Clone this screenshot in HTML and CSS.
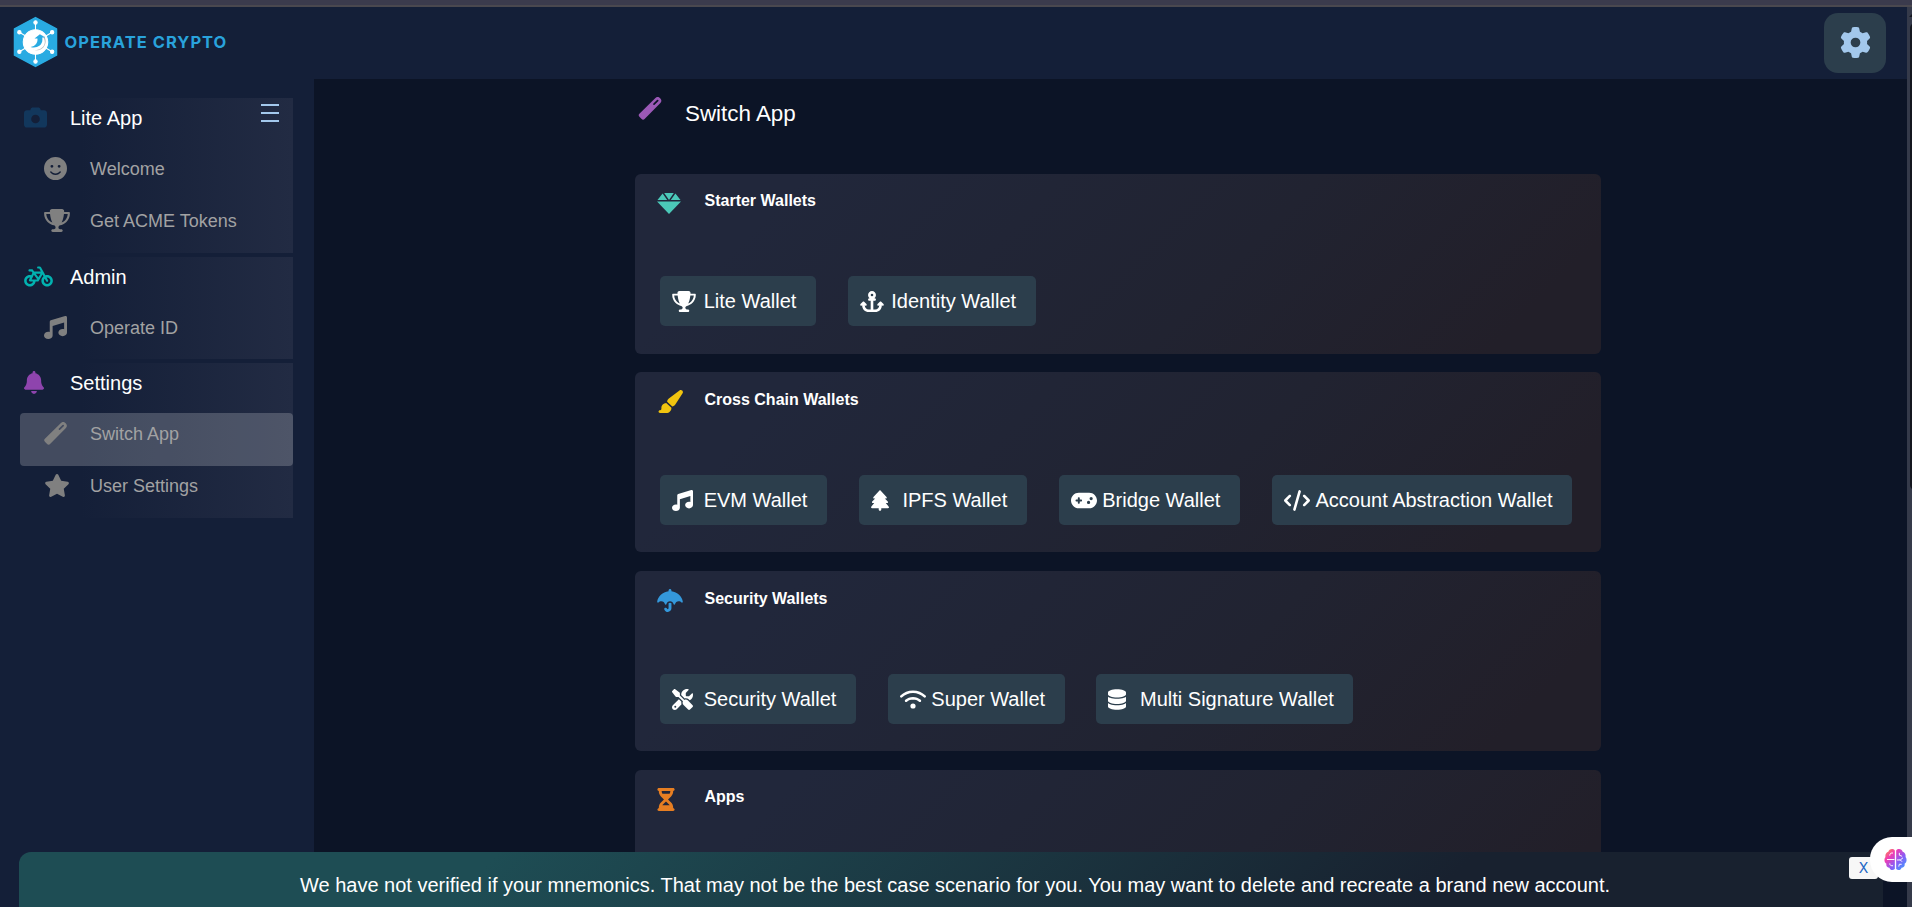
FILE: index.html
```html
<!DOCTYPE html>
<html lang="en">
<head>
<meta charset="utf-8">
<title>Operate Crypto</title>
<link rel="stylesheet" href="styles.css">
</head>
<body>
<svg class="defs" aria-hidden="true">
  <symbol id="trophy" viewBox="0 0 576 512"><path d="M400 0H176c-26.5 0-48.1 21.8-47.1 48.2c.2 5.3 .4 10.6 .7 15.8H24C10.7 64 0 74.7 0 88c0 92.6 33.5 157 78.5 200.7c44.3 43.1 98.3 64.8 138.1 75.8c23.4 6.5 39.4 26 39.4 45.6c0 20.9-17 37.9-37.9 37.9H192c-17.7 0-32 14.3-32 32s14.3 32 32 32H384c17.7 0 32-14.3 32-32s-14.3-32-32-32H357.9C337 448 320 431 320 410.1c0-19.6 15.9-39.2 39.4-45.6c39.9-11 93.9-32.7 138.2-75.8C542.5 245 576 180.6 576 88c0-13.3-10.7-24-24-24H446.4c.3-5.2 .5-10.4 .7-15.8C448.1 21.8 426.5 0 400 0zM48.9 112h84.4c9.1 90.1 29.2 150.3 51.9 190.6c-24.9-11-50.8-26.5-73.2-48.3c-32-31.1-58-76-63-142.3zM464.1 254.3c-22.4 21.8-48.3 37.3-73.2 48.3c22.7-40.3 42.8-100.5 51.9-190.6h84.4c-5.1 66.3-31.1 111.2-63 142.3z"/></symbol>
  <symbol id="music" viewBox="0 0 512 512"><path d="M499.1 6.3c8.1 6 12.9 15.6 12.9 25.7v72V368c0 44.2-43 80-96 80s-96-35.8-96-80s43-80 96-80c11.2 0 22 1.6 32 4.6V147L192 223.8V432c0 44.2-43 80-96 80s-96-35.8-96-80s43-80 96-80c11.2 0 22 1.6 32 4.6V200 128c0-14.1 9.3-26.6 22.8-30.7l320-96c9.7-2.9 20.2-1.1 28.3 5z"/></symbol>
  <symbol id="bell" viewBox="0 0 448 512"><path d="M224 0c-17.7 0-32 14.3-32 32V51.2C119 66 64 130.6 64 208v18.8c0 47-17.3 92.4-48.5 127.6l-7.4 8.3c-8.4 9.4-10.4 22.9-5.3 34.4S19.4 416 32 416H416c12.6 0 24-7.4 29.2-18.9s3.1-25-5.3-34.4l-7.4-8.3C401.3 319.2 384 273.9 384 226.8V208c0-77.4-55-142-128-156.8V32c0-17.7-14.3-32-32-32zm45.3 493.3c12-12 18.7-28.3 18.7-45.3H224 160c0 17 6.7 33.3 18.7 45.3s28.3 18.7 45.3 18.7s33.3-6.7 45.3-18.7z"/></symbol>
  <symbol id="star" viewBox="0 0 576 512"><path d="M316.9 18C311.6 7 300.4 0 288.1 0s-23.4 7-28.8 18L195 150.3 51.4 171.5c-12 1.8-22 10.2-25.7 21.7s-.7 24.2 7.9 32.7L137.8 329 113.2 474.7c-2 12 3 24.2 12.9 31.3s23 8 33.8 2.3l128.3-68.5 128.3 68.5c10.8 5.7 23.9 4.9 33.8-2.3s14.9-19.3 12.9-31.3L438.5 329 542.7 225.9c8.6-8.5 11.7-21.2 7.9-32.7s-13.7-19.9-25.7-21.7L381.2 150.3 316.9 18z"/></symbol>
  <symbol id="camera" viewBox="0 0 512 512"><path d="M149.1 64.8L138.7 96H64C28.7 96 0 124.7 0 160V416c0 35.3 28.7 64 64 64H448c35.3 0 64-28.7 64-64V160c0-35.3-28.7-64-64-64H373.3L362.9 64.8C356.4 45.2 338.1 32 317.4 32H194.6c-20.7 0-39 13.2-45.5 32.8zM256 192a96 96 0 1 1 0 192 96 96 0 1 1 0-192z"/></symbol>
  <symbol id="smile" viewBox="0 0 512 512"><path d="M256 512A256 256 0 1 0 256 0a256 256 0 1 0 0 512zM164.1 325.5C182 346.2 212.6 368 256 368s74-21.8 91.9-42.5c5.8-6.7 15.9-7.4 22.6-1.6s7.4 15.9 1.6 22.6C349.8 372.1 311.1 400 256 400s-93.8-27.9-116.1-53.5c-5.8-6.7-5.1-16.8 1.6-22.6s16.8-5.1 22.6 1.6zM144.4 208a32 32 0 1 1 64 0 32 32 0 1 1 -64 0zm192-32a32 32 0 1 1 0 64 32 32 0 1 1 0-64z"/></symbol>
  <symbol id="anchor" viewBox="0 0 576 512"><path d="M320 96a32 32 0 1 1 -64 0 32 32 0 1 1 64 0zm21.1 80C367 158.8 384 129.4 384 96c0-53-43-96-96-96s-96 43-96 96c0 33.4 17 62.8 42.9 80H224c-17.7 0-32 14.3-32 32s14.3 32 32 32h32V448H208c-53 0-96-43-96-96v-6.1l7 7c9.4 9.4 24.6 9.4 33.9 0s9.4-24.6 0-33.9L97 263c-9.4-9.4-24.6-9.4-33.9 0L7 319c-9.4 9.4-9.4 24.6 0 33.9s24.6 9.4 33.9 0l7-7V352c0 88.4 71.6 160 160 160h80 80c88.4 0 160-71.6 160-160v-6.1l7 7c9.4 9.4 24.6 9.4 33.9 0s9.4-24.6 0-33.9l-56-56c-9.4-9.4-24.6-9.4-33.9 0l-56 56c-9.4 9.4-9.4 24.6 0 33.9s24.6 9.4 33.9 0l7-7V352c0 53-43 96-96 96H320V240h32c17.7 0 32-14.3 32-32s-14.3-32-32-32H341.1z"/></symbol>
  <symbol id="database" viewBox="0 0 448 512"><path d="M448 80v48c0 44.2-100.3 80-224 80S0 172.2 0 128V80C0 35.8 100.3 0 224 0S448 35.8 448 80zM393.2 214.7c20.8-7.4 39.9-16.9 54.8-28.6V288c0 44.2-100.3 80-224 80S0 332.2 0 288V186.1c14.9 11.8 34 21.2 54.8 28.6C99.7 230.7 159.5 240 224 240s124.3-9.3 169.2-25.3zM0 346.1c14.9 11.8 34 21.2 54.8 28.6C99.7 390.7 159.5 400 224 400s124.3-9.3 169.2-25.3c20.8-7.4 39.9-16.9 54.8-28.6V432c0 44.2-100.3 80-224 80S0 476.2 0 432V346.1z"/></symbol>
  <symbol id="wifi" viewBox="0 0 640 512"><path d="M54.2 202.9C123.2 136.7 216.8 96 320 96s196.8 40.7 265.8 106.9c12.8 12.2 33 11.8 45.2-.9s11.8-33-.9-45.2C549.7 79.5 440.4 32 320 32S90.3 79.5 9.8 156.7C-2.9 169-3.3 189.2 8.9 202s32.5 13.2 45.2 .9zM320 256c56.8 0 108.6 21.1 148.2 56c13.3 11.7 33.5 10.4 45.2-2.8s10.4-33.5-2.8-45.2C459.8 219.2 393 192 320 192s-139.8 27.2-190.5 72c-13.3 11.7-14.5 31.9-2.8 45.2s31.9 14.5 45.2 2.8c39.5-34.9 91.3-56 148.2-56zm64 160a64 64 0 1 0 -128 0 64 64 0 1 0 128 0z"/></symbol>
  <symbol id="code" viewBox="0 0 640 512"><path d="M392.8 1.2c-17-4.9-34.7 5-39.6 22l-128 448c-4.9 17 5 34.7 22 39.6s34.7-5 39.6-22l128-448c4.9-17-5-34.7-22-39.6zm80.6 120.1c-12.5 12.5-12.5 32.8 0 45.3L562.7 256l-89.4 89.4c-12.5 12.5-12.5 32.8 0 45.3s32.8 12.5 45.3 0l112-112c12.5-12.5 12.5-32.8 0-45.3l-112-112c-12.5-12.5-32.8-12.5-45.3 0zm-306.7 0c-12.5-12.5-32.8-12.5-45.3 0l-112 112c-12.5 12.5-12.5 32.8 0 45.3l112 112c12.5 12.5 32.8 12.5 45.3 0s12.5-32.8 0-45.3L77.3 256l89.4-89.4c12.5-12.5 12.5-32.8 0-45.3z"/></symbol>
  <symbol id="gamepad" viewBox="0 0 640 512"><path d="M192 64C86 64 0 150 0 256S86 448 192 448H448c106 0 192-86 192-192s-86-192-192-192H192zM496 168a40 40 0 1 1 0 80 40 40 0 1 1 0-80zM392 304a40 40 0 1 1 80 0 40 40 0 1 1 -80 0zM168 200c0-13.3 10.7-24 24-24s24 10.7 24 24v32h32c13.3 0 24 10.7 24 24s-10.7 24-24 24H216v32c0 13.3-10.7 24-24 24s-24-10.7-24-24V280H136c-13.3 0-24-10.7-24-24s10.7-24 24-24h32V200z"/></symbol>
  <symbol id="tree" viewBox="0 0 448 512"><path d="M210.6 5.9L62 169.4c-3.9 4.2-6 9.8-6 15.5C56 197.7 66.3 208 79.1 208H104L30.6 281.4c-4.2 4.2-6.6 10-6.6 16C24 309.9 34.1 320 46.6 320H80L5.4 409.5C1.9 413.7 0 419 0 424.5c0 13 10.5 23.5 23.5 23.5H192v32c0 17.7 14.3 32 32 32s32-14.3 32-32V448H424.5c13 0 23.5-10.5 23.5-23.5c0-5.5-1.9-10.8-5.4-15L368 320h33.4c12.5 0 22.6-10.1 22.6-22.6c0-6-2.4-11.8-6.6-16L344 208h24.9c12.7 0 23.1-10.3 23.1-23.1c0-5.7-2.1-11.3-6-15.5L237.4 5.9C234 2.1 229.1 0 224 0s-10 2.1-13.4 5.9z"/></symbol>
  <symbol id="umbrella" viewBox="0 0 576 512"><path d="M288 0c17.7 0 32 14.3 32 32V49.7C451.8 63.4 557.7 161 573.9 285.9c2 15.6-17.3 24.4-27.8 12.7C532.1 283 504.8 272 480 272c-38.7 0-71 27.5-78.4 64.1c-1.7 8.7-8.7 15.9-17.6 15.9s-15.8-7.2-17.6-15.9C359 299.5 326.7 272 288 272s-71 27.5-78.4 64.1c-1.7 8.7-8.7 15.9-17.6 15.9s-15.8-7.2-17.6-15.9C167 299.5 134.7 272 96 272c-24.8 0-52.1 11-66.1 26.7C19.4 310.4 .1 301.5 2.1 285.9C18.3 161 124.2 63.4 256 49.7V32c0-17.7 14.3-32 32-32zm0 304c12.3 0 23.5 4.6 32 12.2V430.6c0 45-36.5 81.4-81.4 81.4c-30.8 0-59-17.4-72.8-45l-2.3-4.7c-7.9-15.8-1.5-35 14.3-42.9s35-1.5 42.9 14.3l2.3 4.7c3 5.9 9 9.6 15.6 9.6c9.6 0 17.4-7.8 17.4-17.4V316.2c8.5-7.6 19.7-12.2 32-12.2z"/></symbol>
  <symbol id="brush" viewBox="0 0 576 512"><path d="M339.3 367.1c27.3-3.9 51.9-19.4 67.2-42.9L568.2 74.1c12.6-19.5 9.4-45.3-7.6-61.2S517.7-4.4 499.1 9.6L262.4 187.2c-24 18-38.2 46.1-38.4 76.1L339.3 367.1zm-19.6 25.4l-116-104.4C143.9 290.3 96 339.6 96 400c0 3.9 .2 7.8 .6 11.6C98.4 429.1 86.4 448 68.8 448H64c-17.7 0-32 14.3-32 32s14.3 32 32 32H208c61.9 0 112-50.1 112-112c0-2.5-.1-5-.2-7.5z"/></symbol>
  <symbol id="hourglass" viewBox="0 0 384 512"><path d="M32 0C14.3 0 0 14.3 0 32S14.3 64 32 64V75c0 42.4 16.9 83.1 46.9 113.1L146.7 256 78.9 323.9C48.9 353.9 32 394.6 32 437v11c-17.7 0-32 14.3-32 32s14.3 32 32 32H64 320h32c17.7 0 32-14.3 32-32s-14.3-32-32-32V437c0-42.4-16.9-83.1-46.9-113.1L237.3 256l67.9-67.9c30-30 46.9-70.7 46.9-113.1V64c17.7 0 32-14.3 32-32s-14.3-32-32-32H320 64 32zM96 75V64H288V75c0 19-5.6 37.4-16 53H112c-10.3-15.6-16-34-16-53zm16 309c3.5-5.3 7.6-10.3 12.1-14.9L192 301.3l67.9 67.9c4.6 4.6 8.6 9.6 12.2 14.9H112z"/></symbol>
  <symbol id="tools" viewBox="0 0 512 512"><path d="M78.6 5C69.1-2.4 55.6-1.5 47 7L7 47c-8.5 8.5-9.4 22-2.1 31.6l80 104c4.5 5.9 11.6 9.4 19 9.4h54.1l109 109c-14.7 29-10 65.4 14.3 89.6l112 112c12.5 12.5 32.8 12.5 45.3 0l64-64c12.5-12.5 12.5-32.8 0-45.3l-112-112c-24.2-24.2-60.6-29-89.6-14.3l-109-109V104c0-7.5-3.5-14.5-9.4-19L78.6 5zM19.9 396.1C7.2 408.8 0 426.1 0 444.1C0 481.6 30.4 512 67.9 512c18 0 35.3-7.2 48-19.9L233.7 374.3c-7.8-20.9-9-43.6-3.6-65.1l-61.7-61.7L19.9 396.1zM512 144c0-10.5-1.1-20.7-3.2-30.5c-2.4-11.2-16.1-14.1-24.2-6l-63.9 63.9c-3 3-7.1 4.7-11.3 4.7H352c-8.8 0-16-7.2-16-16V102.6c0-4.2 1.7-8.3 4.7-11.3l63.9-63.9c8.1-8.1 5.2-21.8-6-24.2C388.5 1.1 378.3 0 368 0C288.5 0 224 64.5 224 144l0 .8 85.3 85.3c36-9.1 75.8 .5 104 28.7L429 274.5c49-23 83-72.8 83-130.5zM56 432a24 24 0 1 1 48 0 24 24 0 1 1 -48 0z"/></symbol>
  <symbol id="bicycle" viewBox="0 0 640 512"><path d="M312 32c-13.3 0-24 10.7-24 24s10.7 24 24 24h25.7l34.6 64H222.9l-27.4-38C191 99.7 183.7 96 176 96H120c-13.3 0-24 10.7-24 24s10.7 24 24 24h43.7l22.1 30.7-26.6 53.1c-10-2.5-20.5-3.8-31.2-3.8C57.3 224 0 281.3 0 352s57.3 128 128 128c65.3 0 119.1-48.9 127-112h49c8.5 0 16.3-4.5 20.7-11.8l84.8-143.5 21.7 40.1C402.4 276.3 384 312 384 352c0 70.7 57.3 128 128 128s128-57.3 128-128s-57.3-128-128-128c-13.5 0-26.5 2.1-38.7 6L375.4 48.8C369.8 38.4 359 32 347.2 32H312zM458.6 303.7l32.3 59.7c6.3 11.7 20.9 16 32.5 9.7s16-20.9 9.7-32.5l-32.3-59.7c3.6-.6 7.4-.9 11.2-.9c39.8 0 72 32.2 72 72s-32.2 72-72 72s-72-32.2-72-72c0-18.6 7-35.5 18.6-48.3zM133.2 368h65c-7.3 32.1-36 56-70.2 56c-39.8 0-72-32.2-72-72s32.2-72 72-72c1.7 0 3.4 .1 5.1 .2l-24.2 48.5c-9 18.1 4.1 39.4 24.3 39.4zm33.7-48l50.7-101.3 72.9 101.2-.1 .1H166.8zm90.6-128H365.9L317 274.8 257.4 192z"/></symbol>
  <symbol id="gear" viewBox="0 0 512 512"><path d="M495.9 166.6c3.2 8.7 .5 18.4-6.4 24.6l-43.3 39.4c1.1 8.3 1.7 16.8 1.7 25.4s-.6 17.1-1.7 25.4l43.3 39.4c6.9 6.2 9.6 15.9 6.4 24.6c-4.4 11.9-9.7 23.3-15.8 34.3l-4.7 8.1c-6.6 11-14 21.4-22.1 31.2c-5.9 7.2-15.7 9.6-24.5 6.8l-55.7-17.7c-13.4 10.3-28.2 18.9-44 25.4l-12.5 57.1c-2 9.1-9 16.3-18.2 17.8c-13.8 2.3-28 3.5-42.5 3.5s-28.7-1.2-42.5-3.5c-9.2-1.5-16.2-8.7-18.2-17.8l-12.5-57.1c-15.8-6.5-30.6-15.1-44-25.4L83.1 425.9c-8.8 2.8-18.6 .3-24.5-6.8c-8.1-9.8-15.5-20.2-22.1-31.2l-4.7-8.1c-6.1-11-11.4-22.4-15.8-34.3c-3.2-8.7-.5-18.4 6.4-24.6l43.3-39.4C64.6 273.1 64 264.6 64 256s.6-17.1 1.7-25.4L22.4 191.2c-6.9-6.2-9.6-15.9-6.4-24.6c4.4-11.9 9.7-23.3 15.8-34.3l4.7-8.1c6.6-11 14-21.4 22.1-31.2c5.9-7.2 15.7-9.6 24.5-6.8l55.7 17.7c13.4-10.3 28.2-18.9 44-25.4l12.5-57.1c2-9.1 9-16.3 18.2-17.8C227.3 1.2 241.5 0 256 0s28.7 1.2 42.5 3.5c9.2 1.5 16.2 8.7 18.2 17.8l12.5 57.1c15.8 6.5 30.6 15.1 44 25.4l55.7-17.7c8.8-2.8 18.6-.3 24.5 6.8c8.1 9.8 15.5 20.2 22.1 31.2l4.7 8.1c6.1 11 11.4 22.4 15.8 34.3zM256 336a80 80 0 1 0 0-160 80 80 0 1 0 0 160z"/></symbol>
  <symbol id="baton" viewBox="0 0 24 24"><path fill-rule="evenodd" d="M17.4 1.2a3.4 3.4 0 0 1 5.2 5.2L6.6 22.6a2.4 2.4 0 0 1-3.6 0L1.2 20.9a2.4 2.4 0 0 1 0-3.6ZM19.3 3.2 15.6 6.9a.8.8 0 0 0 1.2 1.2l3.8-3.7a.8.8 0 0 0-1.3-1.2Z"/></symbol>
  <symbol id="gem" viewBox="0 0 24 21"><path d="M7.2 0h9.6L12 6.9ZM5.6.5 10.2 7H.5ZM18.4.5 23.5 7h-9.7ZM0 8.6h24L12 21Z"/></symbol>
</svg>

<div class="frame-edge"></div>
<header class="topbar">
  <div class="brand">
    <svg class="brand-mark" viewBox="0 0 46 52">
      <path d="M23 1 44.5 12.5v27L23 51 1.5 39.5v-27Z" fill="#29abe2" stroke="#29abe2" stroke-width="1.5" stroke-linejoin="round"/>
      <g stroke="#fff" stroke-width="1.1" fill="#fff">
        <path d="M23 6v40M6.500 16 40 36M40 16 6.500 36"/>
        <circle cx="23" cy="6" r="1.700"/><circle cx="23" cy="46" r="1.700"/>
        <circle cx="6.500" cy="16" r="1.700"/><circle cx="40" cy="36" r="1.700"/>
        <circle cx="40" cy="16" r="1.700"/><circle cx="6.500" cy="36" r="1.700"/>
        <circle cx="23" cy="26" r="12.500"/>
      </g>
      <path d="M20 34c6 1 12-2 12.500-7.500 0-2-.5-3.500-1.500-5l2-1-6-2 5 2c2 3 2 8-1 11-3 3-7 3.500-11 2.500Z" fill="#b9bcc0"/>
      <path d="M18 31c5 2 12-1 12-7v-2.500h3L27.500 18l-5.500 4.500 3-.2c.5 4.200-2 8-7 8.700Z" fill="#29abe2"/>
    </svg>
    <span class="brand-name">OPERATE CRYPTO</span>
  </div>
  <button class="gear-button" aria-label="Settings"><svg><use href="#gear"/></svg></button>
</header>

<div class="body">
  <nav class="sidebar">
    <section class="group">
      <div class="group-head"><span class="slot"><svg class="ico c-navy w23"><use href="#camera"/></svg></span>Lite App
        <span class="burger"><i></i><i></i><i></i></span></div>
      <a class="item"><span class="slot"><svg class="ico w23"><use href="#smile"/></svg></span>Welcome</a>
      <a class="item"><span class="slot"><svg class="ico w26"><use href="#trophy"/></svg></span>Get ACME Tokens</a>
    </section>
    <section class="group">
      <div class="group-head"><span class="slot"><svg class="ico c-teal w29"><use href="#bicycle"/></svg></span>Admin</div>
      <a class="item"><span class="slot"><svg class="ico w23"><use href="#music"/></svg></span>Operate ID</a>
    </section>
    <section class="group">
      <div class="group-head"><span class="slot"><svg class="ico c-purple w20"><use href="#bell"/></svg></span>Settings</div>
      <a class="item active"><span class="slot"><svg class="ico w23"><use href="#baton"/></svg></span>Switch App</a>
      <a class="item"><span class="slot"><svg class="ico w26"><use href="#star"/></svg></span>User Settings</a>
    </section>
  </nav>

  <main class="main">
    <div class="column">
      <h1 class="title"><svg class="ico c-violet w24"><use href="#baton"/></svg><span>Switch App</span></h1>
      <section class="card">
        <h2><span class="slot"><svg class="ico c-mint w24"><use href="#gem"/></svg></span>Starter Wallets</h2>
        <div class="buttons">
          <a class="btn"><span class="slot"><svg class="w24"><use href="#trophy"/></svg></span>Lite Wallet</a>
          <a class="btn"><span class="slot"><svg class="w24"><use href="#anchor"/></svg></span>Identity Wallet</a>
        </div>
      </section>
      <section class="card">
        <h2><span class="slot"><svg class="ico c-yellow w26"><use href="#brush"/></svg></span>Cross Chain Wallets</h2>
        <div class="buttons">
          <a class="btn"><span class="slot"><svg class="w21"><use href="#music"/></svg></span>EVM Wallet</a>
          <a class="btn"><span class="slot"><svg class="w18"><use href="#tree"/></svg></span>IPFS Wallet</a>
          <a class="btn"><span class="slot"><svg class="w26"><use href="#gamepad"/></svg></span>Bridge Wallet</a>
          <a class="btn"><span class="slot"><svg class="w26"><use href="#code"/></svg></span>Account Abstraction Wallet</a>
        </div>
      </section>
      <section class="card">
        <h2><span class="slot"><svg class="ico c-blue w26"><use href="#umbrella"/></svg></span>Security Wallets</h2>
        <div class="buttons">
          <a class="btn"><span class="slot"><svg class="w21"><use href="#tools"/></svg></span>Security Wallet</a>
          <a class="btn"><span class="slot"><svg class="w26"><use href="#wifi"/></svg></span>Super Wallet</a>
          <a class="btn"><span class="slot"><svg class="w18"><use href="#database"/></svg></span>Multi Signature Wallet</a>
        </div>
      </section>
      <section class="card last">
        <h2><span class="slot"><svg class="ico c-orange w18"><use href="#hourglass"/></svg></span>Apps</h2>
      </section>
    </div>
  </main>
</div>

<div class="scrollbar"><span class="arrow"></span><span class="thumb"></span></div>

<div class="notice">We have not verified if your mnemonics. That may not be the best case scenario for you. You may want to delete and recreate a brand new account.</div>
<div class="close-tab">X</div>
<div class="assistant">
  <svg viewBox="0 0 24 24">
    <defs><linearGradient id="brain" x1="0" y1="0" x2="1" y2="1">
      <stop offset="0" stop-color="#ff9a3c"/><stop offset=".3" stop-color="#f03cb4"/><stop offset=".6" stop-color="#8a5cf6"/><stop offset="1" stop-color="#2fa8ff"/>
    </linearGradient></defs>
    <path fill="url(#brain)" d="M11.300 2.500v19.500C9 24 6.300 23 5.700 20.500 3.300 20.500 2 18.500 2.500 16.500.2 15-.2 11.500 1.500 9.500 1 6.500 2.500 4.500 4.500 4 5 .8 9.500 0 11.300 2.500ZM12.700 2.500v19.500c2.300 2 5 1 5.600-1.500 2.400 0 3.700-2 3.200-4 2.300-1.500 2.700-5 1-7 .5-3-1-5-3-5.500C19 .8 14.500 0 12.700 2.500Z"/>
    <path fill="none" stroke="#fff" stroke-width="1" stroke-linecap="round" d="M3.500 12h7M6 7.500c0-2 1.500-2.500 3-2.300M6 16.500c0 2 1.500 2 3 2M16 5.500v2l2.500 1M14 12.500h3l2.500-2M17 12.500l1.500 1.500M15.500 19l.5-2h2"/>
  </svg>
</div>
</body>
</html>
```

FILE: styles.css
```css
* { box-sizing: border-box; }
html, body { height: 100%; }
body {
  margin: 0;
  display: flex;
  flex-direction: column;
  overflow: hidden;
  background: #0c1426;
  color: #fff;
  font-family: "Liberation Sans", Arial, sans-serif;
}
.defs { position: absolute; width: 0; height: 0; }
svg { display: block; fill: currentColor; }

.frame-edge { flex: none; height: 7px; background: #3b3b4d; border-bottom: 2px solid #4a484f; }

.topbar {
  flex: none;
  height: 72px;
  display: flex;
  align-items: flex-start;
  justify-content: space-between;
  padding: 6px 26px 0 13px;
  background: #141f38;
}
.brand { display: flex; align-items: center; gap: 6.5px; padding-top: 3px; }
.brand-mark { width: 45px; height: 52px; }
.brand-name { color: #29a3dc; font: 700 16.5px Inter, sans-serif; letter-spacing: 1.02px; white-space: nowrap; }
.gear-button {
  width: 62px; height: 60px;
  display: grid; place-items: center;
  border: 0; border-radius: 14px;
  background: #2c3e4c; color: #a3c8ec;
  padding: 0 0 1px;
}
.gear-button svg { width: 31px; height: 31px; }

.body { flex: 1; min-height: 0; display: flex; overflow: hidden; }
.sidebar { flex: none; width: 314px; padding: 19px 21px 0 20px; background: #141f38; }
.group { margin-bottom: 4px; background: linear-gradient(90deg, #141f38 22%, #222b43); }
.group-head { display: flex; height: 50.2px; padding: 7px 0 0 4px; font-size: 20px; line-height: 26px; }
.group-head .slot { width: 46px; height: 25px; display: flex; align-items: center; }
.burger { margin: -1px 14px 0 auto; width: 18px; height: 18px; display: flex; flex-direction: column; justify-content: space-between; }
.burger i { height: 2px; background: #a3c8ec; }
.item { display: flex; height: 52.3px; padding: 8.6px 0 0 24px; font-size: 18px; line-height: 25px; color: #a2a2a3; border-radius: 4px; }
.item .slot { width: 46px; height: 23px; display: flex; align-items: center; color: #808080; }
.item.active { background: rgba(255, 255, 255, 0.2); }

.w18 { width: 18px; } .w20 { width: 20px; } .w21 { width: 21px; } .w23 { width: 23px; }
.w24 { width: 24px; } .w26 { width: 26px; } .w29 { width: 29px; }
.ico { height: 23px; }
.c-navy { color: #12375c; } .c-teal { color: #02b2b0; } .c-purple { color: #8e44ad; }
.c-violet { color: #9b59b6; } .c-mint { color: #4bc8b8; } .c-yellow { color: #f1c40f; }
.c-blue { color: #3498db; } .c-orange { color: #e67e22; }

.main { flex: 1; min-width: 0; padding-left: 321px; }
.column { width: 966px; height: 100%; display: flex; flex-direction: column; }
.title { flex: none; margin: 0; height: 94.7px; display: flex; padding: 18px 0 0 3px; font-size: 22.4px; font-weight: 400; line-height: 34px; }
.title span { padding-left: 23px; }
.card {
  height: 180px;
  flex: none;
  margin-bottom: 18.7px;
  padding: 15.5px 25px 0;
  border-radius: 6px;
  background: linear-gradient(135deg, #21273b 15%, #212331 60%, #221f29 90%);
}
.card.last { flex: 1 1 0; height: auto; margin-bottom: 0; border-radius: 6px 6px 0 0; background-size: 100% 180px; }
.card h2 { margin: 0; display: flex; font-size: 16px; line-height: 24px; height: 87px; }
.card h2 .slot { width: 47.5px; margin-left: -3px; height: 28px; display: flex; align-items: center; }
.buttons { display: flex; gap: 31.8px; }
.btn { height: 50px; display: flex; align-items: center; padding: 1px 19.5px 0 12px; border-radius: 5px; background: #2c3e4c; font-size: 20px; white-space: nowrap; }
.btn .slot { width: 31.7px; }
.btn svg { height: 21px; }

.scrollbar { position: absolute; left: 1907px; top: 7px; width: 5px; bottom: 0; background: #353a4a; overflow: hidden; }
.arrow { position: absolute; left: 2px; top: 5px; border: 5px solid transparent; border-top: 0; border-bottom-color: #14171f; }
.thumb { position: absolute; left: 3px; top: 16px; width: 10px; height: 467px; border-radius: 5px; background: #14171f; }

.notice {
  position: absolute; left: 19px; top: 852px; width: 1864px; height: 55px;
  padding: 20px 0 0 8px;
  border-radius: 12px 12px 0 0;
  background: linear-gradient(135deg, #1e4d54 25%, #18212f 76%);
  text-align: center; font-size: 20px; line-height: 26px;
}
.close-tab {
  position: absolute; left: 1849px; top: 857px; width: 29px; height: 22px;
  border-radius: 3px; background: #f7f7f7; color: #1c66c4;
  font: 400 14px/22px Inter, sans-serif; text-align: center;
}
.assistant {
  position: absolute; left: 1870px; top: 837px; width: 42px; height: 45px;
  border-radius: 22px 0 0 22px; background: #fff; padding: 11px 0 0 14px;
}
.assistant svg { width: 23px; height: 23px; }
```
